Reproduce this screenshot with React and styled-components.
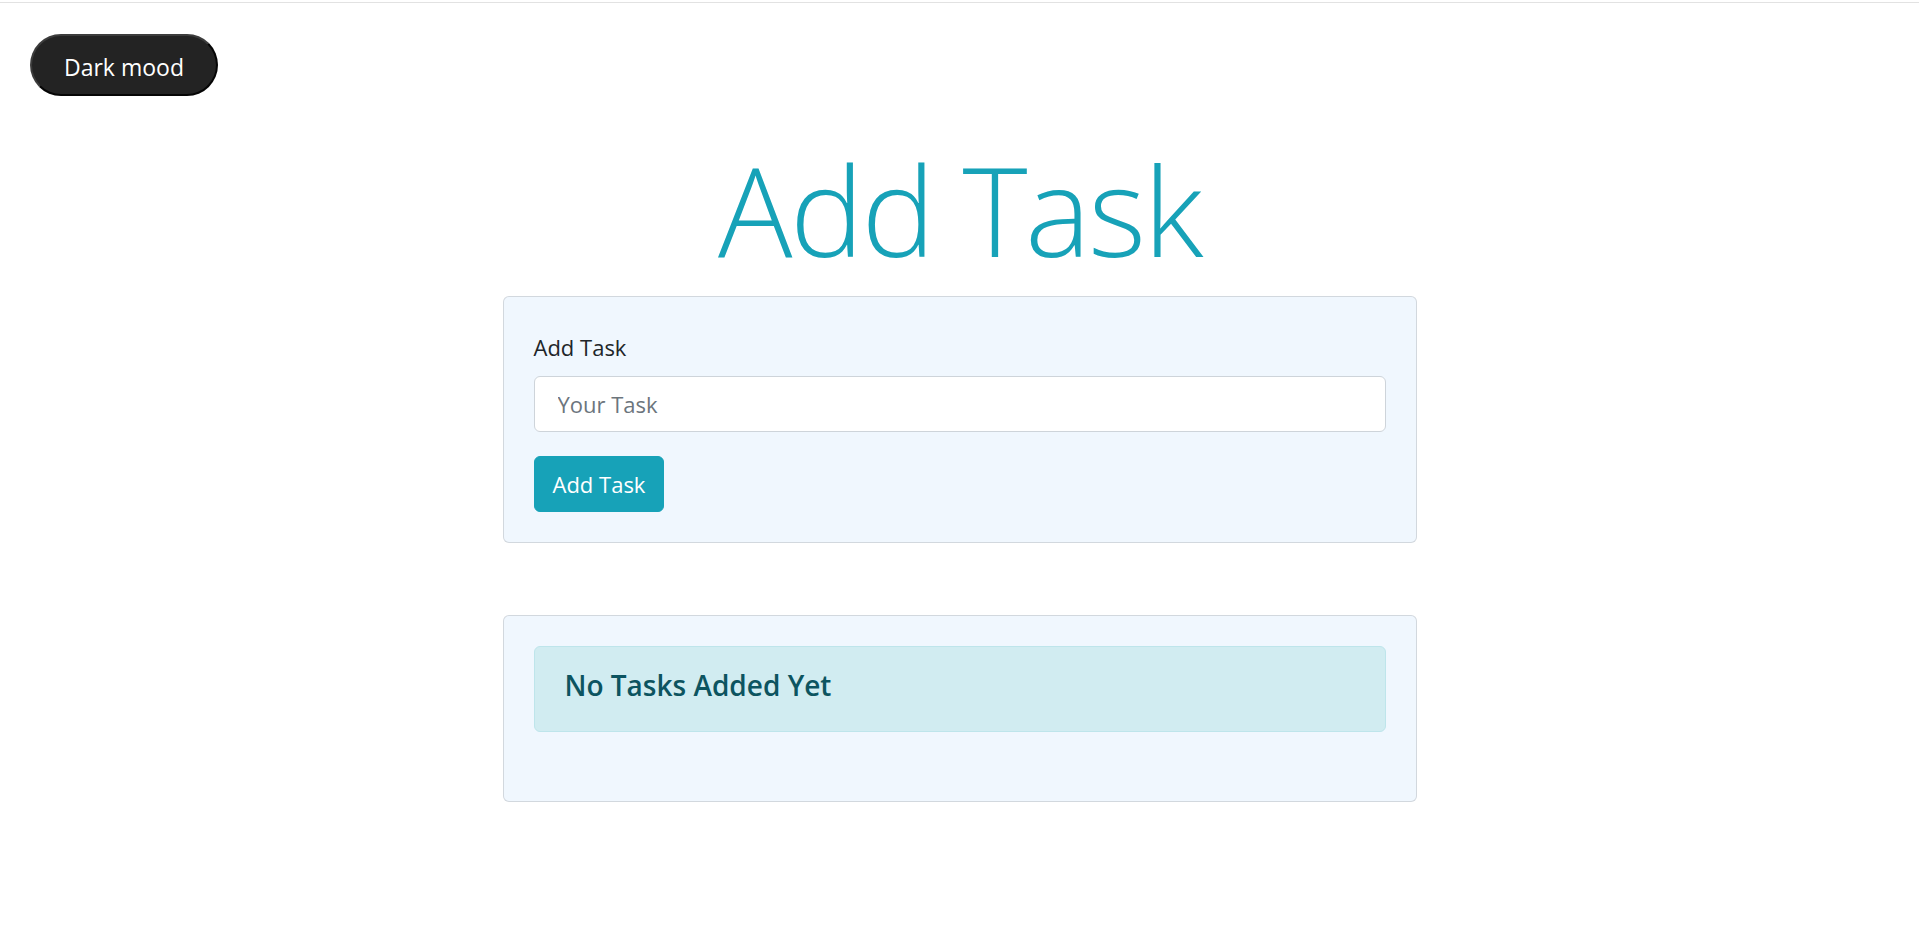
import styled, { createGlobalStyle } from "styled-components"
import { useState } from "react"

const GlobalStyle = createGlobalStyle`
    body {
        margin: 0;
        font-family: "Open Sans", "Noto Sans", sans-serif;
        color: #212529;
        background: #fff;
    }
    * {
        box-sizing: border-box;
    }
`

const App = () => {
    const [task, setTask] = useState("")
    const tasks = []

    return (
        <>
            <GlobalStyle />
            <TopLine />
            <ToggleBar>
                <ThemeButton type="button">Dark mood</ThemeButton>
            </ToggleBar>
            <Main>
                <Title>Add Task</Title>
                <Card>
                    <Label htmlFor="task">Add Task</Label>
                    <TaskInput
                        id="task"
                        placeholder="Your Task"
                        value={task}
                        onChange={(e) => setTask(e.target.value)}
                    />
                    <AddButton type="button">Add Task</AddButton>
                </Card>
                <Card $spaced>
                    {tasks.length === 0 && (
                        <Alert>
                            <AlertHeading>No Tasks Added Yet</AlertHeading>
                        </Alert>
                    )}
                </Card>
            </Main>
        </>
    )
}

export default App

const TopLine = styled.div`
    height: 1px;
    margin-top: 2px;
    background: #e2e2e2;
`

const ToggleBar = styled.div`
    display: flex;
    padding: 31px 0 0 30px;
`

const ThemeButton = styled.button`
    height: 62px;
    padding: 3px 32px 0;
    font-family: "Open Sans", sans-serif;
    font-size: 23px;
    color: #fff;
    background: #232323;
    border: 2px solid;
    border-color: #3c3c3c #050505 #050505 #3c3c3c;
    border-radius: 31px;
    cursor: pointer;
`

const Main = styled.main`
    width: 914px;
    margin: 0 auto;
    display: flex;
    flex-direction: column;
`

const Title = styled.h1`
    margin: 39px 0 12px;
    text-align: center;
    font-size: 124px;
    font-weight: 300;
    line-height: 1.2;
    letter-spacing: -2.5px;
    color: #17a2b8;
`

const Card = styled.section`
    display: flex;
    flex-direction: column;
    align-items: flex-start;
    margin-top: ${(p) => (p.$spaced ? "72px" : "0")};
    padding: 30px;
    background: #f0f7fe;
    border: 1px solid rgba(0, 0, 0, 0.125);
    border-radius: 6px;
`

const Label = styled.label`
    padding-top: 2px;
    margin-bottom: 11px;
    font-size: 22px;
    line-height: 36px;
    color: #212529;
`

const TaskInput = styled.input`
    width: 100%;
    height: 56px;
    margin-bottom: 24px;
    padding: 0 23px;
    font-family: "Open Sans", sans-serif;
    font-size: 22px;
    color: #495057;
    background: #fff;
    border: 1px solid #ced4da;
    border-radius: 6px;
    outline: none;

    &::placeholder {
        color: #6c757d;
    }
`

const AddButton = styled.button`
    height: 56px;
    padding: 0 18px;
    font-family: "Open Sans", sans-serif;
    font-size: 22px;
    color: #fff;
    background: #17a2b8;
    border: 1px solid #17a2b8;
    border-radius: 6px;
    cursor: pointer;
`

const Alert = styled.div`
    width: 100%;
    margin-bottom: 39px;
    padding: 18px 30px;
    background: #d1ecf1;
    border: 1px solid #bee5eb;
    border-radius: 6px;
    color: #0c5460;
`

const AlertHeading = styled.h5`
    margin: 0 0 10px;
    padding-top: 2px;
    font-size: 28px;
    font-weight: 600;
    line-height: 36px;
`
